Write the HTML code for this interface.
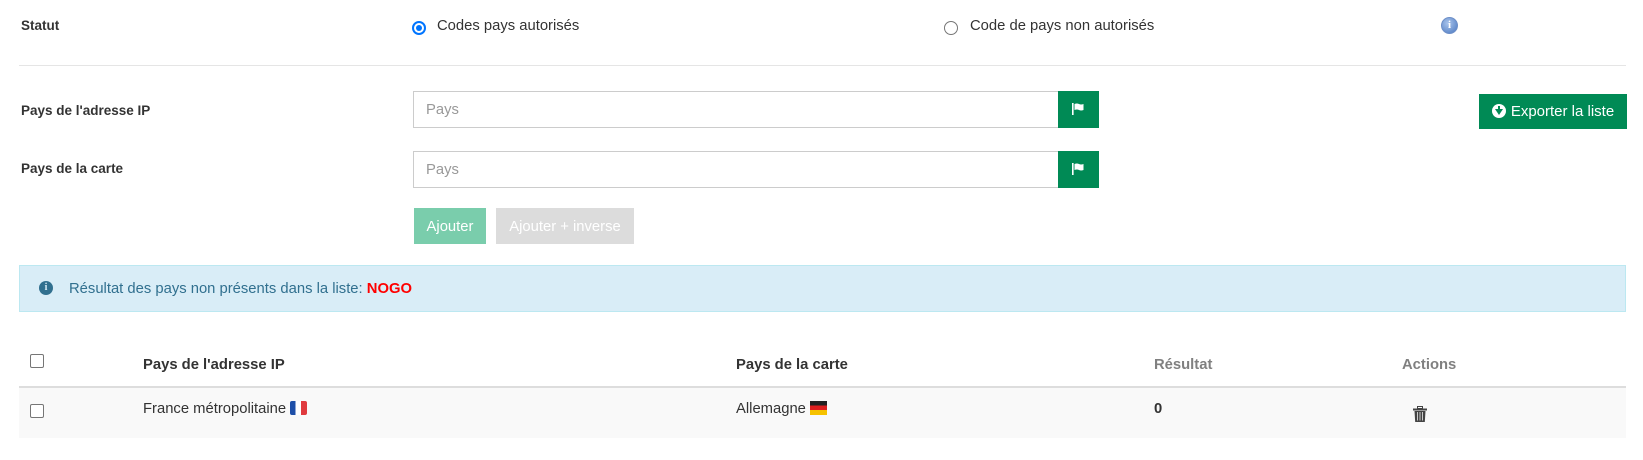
<!DOCTYPE html>
<html><head><meta charset="utf-8"><style>
*{box-sizing:border-box;margin:0;padding:0}
body{width:1643px;height:460px;background:#fff;font-family:"Liberation Sans",sans-serif;font-size:14.8px;color:#333;position:relative;overflow:hidden}
.a{position:absolute;white-space:nowrap}
.lbl{font-weight:bold}
.fl{font-weight:bold;font-size:13.5px}
.radio{position:absolute;width:14px;height:14px;border-radius:50%;border:1px solid #767676;background:#fff}
.inp{position:absolute;border:1px solid #ccc;background:#fff;color:#999;padding-left:12px;line-height:37px}
.gbtn{position:absolute;background:#008a55;color:#fff}
.cb{position:absolute;width:14px;height:14px;border:1px solid #767676;border-radius:2px;background:#fff}
</style></head><body>
<div class="a fl" style="left:21px;top:18px">Statut</div>
<div class="radio" style="left:412px;top:21px;border:2px solid #0075ff;"><div style="position:absolute;left:2px;top:2px;width:6px;height:6px;border-radius:50%;background:#0075ff"></div></div>
<div class="a" style="left:437px;top:18px">Codes pays autorisés</div>
<div class="radio" style="left:944px;top:21px"></div>
<div class="a" style="left:970px;top:18px">Code de pays non autorisés</div>
<div class="a" style="left:1441px;top:17px;width:17px;height:17px;border-radius:50%;background:radial-gradient(circle at 40% 35%,#a9c4ec,#4a78c0);border:1px solid #6d8fc8;color:#fff;font-size:11px;font-weight:bold;text-align:center;line-height:15px;font-family:'Liberation Serif',serif">i</div>
<div class="a" style="left:19px;top:65px;width:1607px;height:1px;background:#e5e5e5"></div>

<div class="a fl" style="left:21px;top:103px">Pays de l'adresse IP</div>
<div class="inp" style="left:413px;top:91px;width:646px;height:37px">Pays</div>
<div class="gbtn" style="left:1058px;top:91px;width:41px;height:37px"><svg style="position:absolute;left:14px;top:12px" width="13" height="12" viewBox="0 0 13 12"><rect x="0" y="0" width="1.6" height="12" fill="#fff"/><path d="M2.5 1 Q5 0 7 1 T11.5 1 V7 Q9 8 7 7 T2.5 7Z" fill="#fff"/></svg></div>
<div class="gbtn" style="left:1479px;top:94px;width:148px;height:35px;font-size:15px;line-height:35px;text-align:center"><span style="display:inline-block;width:14px;height:14px;border-radius:50%;background:#fff;vertical-align:-2px;position:relative;margin-right:5px"><span style="position:absolute;left:3px;border-left:4px solid transparent;border-right:4px solid transparent;border-top:6px solid #008a55;top:5px"></span><span style="position:absolute;left:6px;top:2px;width:2px;height:4px;background:#008a55"></span></span>Exporter la liste</div>

<div class="a fl" style="left:21px;top:161px">Pays de la carte</div>
<div class="inp" style="left:413px;top:151px;width:646px;height:37px">Pays</div>
<div class="gbtn" style="left:1058px;top:151px;width:41px;height:37px"><svg style="position:absolute;left:14px;top:12px" width="13" height="12" viewBox="0 0 13 12"><rect x="0" y="0" width="1.6" height="12" fill="#fff"/><path d="M2.5 1 Q5 0 7 1 T11.5 1 V7 Q9 8 7 7 T2.5 7Z" fill="#fff"/></svg></div>

<div class="a" style="left:414px;top:208px;width:72px;height:36px;background:#7acdac;color:#fff;text-align:center;line-height:38px">Ajouter</div>
<div class="a" style="left:496px;top:208px;width:138px;height:36px;background:#dcdcdc;color:#fff;text-align:center;line-height:38px">Ajouter + inverse</div>

<div class="a" style="left:19px;top:265px;width:1607px;height:47px;background:#d9edf7;border:1px solid #bce8f1"></div>
<div class="a" style="left:39px;top:281px;width:14px;height:14px;border-radius:50%;background:#31708f;color:#d9edf7;font-size:10px;font-weight:bold;text-align:center;line-height:14px;font-family:'Liberation Serif',serif">i</div>
<div class="a" style="left:69px;top:281px;color:#31708f">Résultat des pays non présents dans la liste: <b style="color:#f00">NOGO</b></div>

<div class="cb" style="left:30px;top:354px"></div>
<div class="a lbl" style="left:143px;top:357px">Pays de l'adresse IP</div>
<div class="a lbl" style="left:736px;top:357px">Pays de la carte</div>
<div class="a lbl" style="left:1154px;top:357px;color:#808080">Résultat</div>
<div class="a lbl" style="left:1402px;top:357px;color:#808080">Actions</div>
<div class="a" style="left:19px;top:386px;width:1607px;height:2px;background:#ddd"></div>
<div class="a" style="left:19px;top:388px;width:1607px;height:50px;background:#f9f9f9"></div>
<div class="cb" style="left:30px;top:404px"></div>
<div class="a" style="left:143px;top:401px">France métropolitaine <span style="display:inline-block;width:17px;height:14px;vertical-align:-2px;background:linear-gradient(90deg,#1e4fa8 33%,#fff 33%,#fff 66%,#e03a3e 66%);border-radius:2px"></span></div>
<div class="a" style="left:736px;top:401px">Allemagne <span style="display:inline-block;width:17px;height:14px;vertical-align:-2px;background:linear-gradient(#222 33%,#dd1f1f 33%,#dd1f1f 66%,#f6c200 66%)"></span></div>
<div class="a lbl" style="left:1154px;top:401px">0</div>
<svg class="a" style="left:1413px;top:406px" width="14" height="16" viewBox="0 0 14 16"><rect x="4.5" y="0.5" width="5" height="2" fill="none" stroke="#444"/><rect x="0" y="2.5" width="14" height="2" fill="#444"/><path d="M1.5 5 H12.5 L11.8 16 H2.2Z" fill="#444"/><rect x="4" y="6" width="1" height="8.5" fill="#ccc"/><rect x="6.5" y="6" width="1" height="8.5" fill="#ccc"/><rect x="9" y="6" width="1" height="8.5" fill="#ccc"/></svg>
</body></html>
